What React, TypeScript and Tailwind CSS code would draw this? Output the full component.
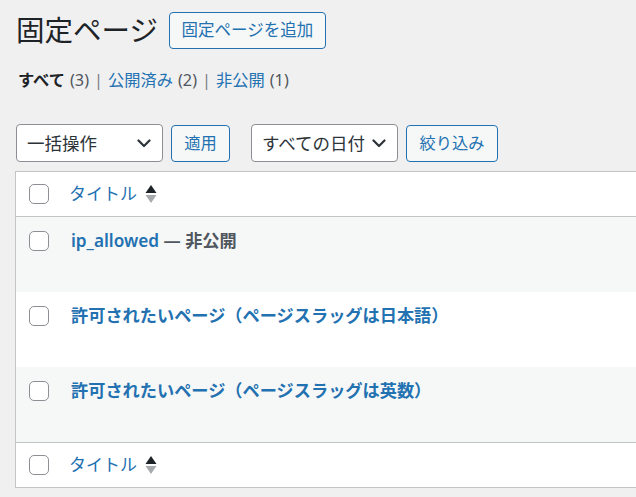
import React from "react";

const font = {
  fontFamily: '"Noto Sans", "Noto Sans CJK JP", sans-serif',
};

function Chevron() {
  return (
    <svg width="14" height="9" viewBox="0 0 14 9" className="shrink-0">
      <polyline
        points="1.5,1.5 7,7 12.5,1.5"
        fill="none"
        stroke="#2c3338"
        strokeWidth="2.2"
        strokeLinecap="round"
        strokeLinejoin="round"
      />
    </svg>
  );
}

function SortArrows() {
  return (
    <svg width="12" height="20" viewBox="0 0 12 20" className="ml-[8px] shrink-0">
      <polygon points="6,1 11.5,9 0.5,9" fill="#1d2327" />
      <polygon points="0.5,11 11.5,11 6,19" fill="#a7aaad" />
    </svg>
  );
}

function Checkbox() {
  return (
    <span className="block w-[20px] h-[20px] rounded-[5px] border border-[#8c8f94] bg-white shrink-0" />
  );
}

function FakeSelect({ label, width }: { label: string; width: string }) {
  return (
    <div
      className={`${width} h-[38px] flex items-center justify-between pl-[10px] pr-[11px] bg-white border border-[#8c8f94] rounded-[4px] text-[17.5px] text-[#2c3338]`}
    >
      <span>{label}</span>
      <Chevron />
    </div>
  );
}

function SecondaryButton({ label, width }: { label: string; width: string }) {
  return (
    <button
      className={`${width} h-[37px] flex items-center justify-center bg-[#f6f7f7] border border-[#2271b1] rounded-[4px] text-[16.25px] text-[#2271b1]`}
    >
      {label}
    </button>
  );
}

interface PageRow {
  id: number;
  title: string;
  state?: string;
  striped: boolean;
}

const rows: PageRow[] = [
  { id: 1, title: "ip_allowed", state: "非公開", striped: true },
  { id: 2, title: "許可されたいページ（ページスラッグは日本語）", striped: false },
  { id: 3, title: "許可されたいページ（ページスラッグは英数）", striped: true },
];

function HeaderRow({ top }: { top?: boolean }) {
  return (
    <div
      className={`h-[45px] flex items-center pl-[13px] bg-white ${top ? "border-b" : "border-t"} border-[#c3c4c7]`}
    >
      <Checkbox />
      <div className="flex items-center ml-[20px] text-[17px] text-[#2271b1]">
        <span>タイトル</span>
        <SortArrows />
      </div>
    </div>
  );
}

export default function App() {
  return (
    <div className="min-h-screen bg-[#f0f0f1] overflow-hidden" style={font}>
      <div className="pl-[16px] pt-[12px]">
        <div className="flex items-center h-[37px] gap-[11px]">
          <h1 className="text-[28.5px] leading-none font-normal text-[#1d2327]">
            固定ページ
          </h1>
          <button className="h-[37px] w-[157px] flex items-center justify-center bg-[#f6f7f7] border border-[#2271b1] rounded-[4px] text-[16.5px] text-[#2271b1]">
            固定ページを追加
          </button>
        </div>

        <ul className="mt-[17px] h-[28px] flex items-center ml-[2px] text-[16.25px] text-[#50575e]">
          <li>
            <span className="font-bold text-[#1d2327]">すべて</span>
            <span className="ml-[5px]">(3)</span>
            <span className="mx-[5px] text-[#787c82]">|</span>
          </li>
          <li>
            <span className="text-[#2271b1]">公開済み</span>
            <span className="ml-[5px]">(2)</span>
            <span className="mx-[5px] text-[#787c82]">|</span>
          </li>
          <li>
            <span className="text-[#2271b1]">非公開</span>
            <span className="ml-[5px]">(1)</span>
          </li>
        </ul>

        <div className="mt-[30px] flex items-center">
          <FakeSelect label="一括操作" width="w-[147px]" />
          <div className="ml-[8px]">
            <SecondaryButton label="適用" width="w-[59px]" />
          </div>
          <div className="ml-[21px]">
            <FakeSelect label="すべての日付" width="w-[147px]" />
          </div>
          <div className="ml-[8px]">
            <SecondaryButton label="絞り込み" width="w-[92px]" />
          </div>
        </div>

        <div className="mt-[9px] -ml-[1px] w-[700px] border border-[#c3c4c7] bg-white">
          <HeaderRow top />
          {rows.map((row) => (
            <div
              key={row.id}
              className={`h-[75px] flex items-start pl-[13px] pt-[14px] ${row.striped ? "bg-[#f6f7f7]" : "bg-white"}`}
            >
              <Checkbox />
              <div className="ml-[22px] -mt-[2px] text-[17.2px] font-semibold leading-[24px]">
                <span className="text-[#2271b1]">{row.title}</span>
                {row.state && (
                  <span className="text-[#50575e]"> — {row.state}</span>
                )}
              </div>
            </div>
          ))}
          <HeaderRow />
        </div>
      </div>
    </div>
  );
}
